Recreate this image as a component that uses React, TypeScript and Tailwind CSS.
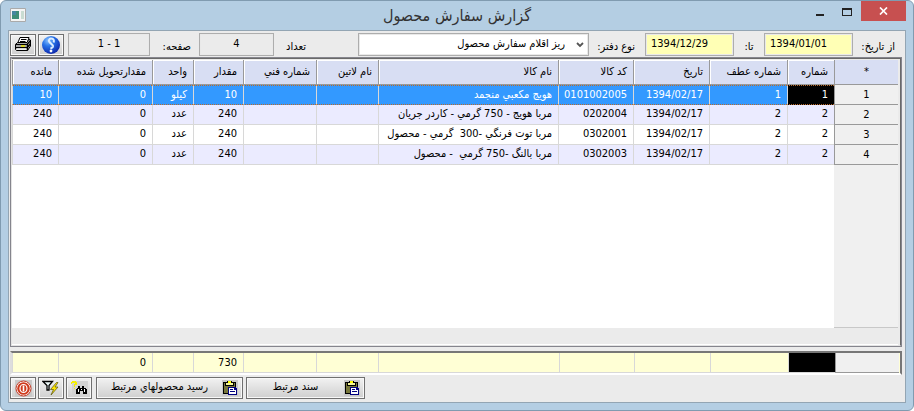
import type { ReactNode } from "react";

interface OrderRow {
  number: string;
  reference: string;
  date: string;
  code: string;
  name: string;
  quantity: string;
  unit: string;
  delivered: string;
  remaining: string;
}

const ROWS: OrderRow[] = [
  {
    number: "1",
    reference: "1",
    date: "1394/02/17",
    code: "0101002005",
    name: "هويج مکعبي منجمد",
    quantity: "10",
    unit: "کيلو",
    delivered: "0",
    remaining: "10",
  },
  {
    number: "2",
    reference: "2",
    date: "1394/02/17",
    code: "0202004",
    name: "مربا هويج - 750 گرمي - کاردر جريان",
    quantity: "240",
    unit: "عدد",
    delivered: "0",
    remaining: "240",
  },
  {
    number: "2",
    reference: "2",
    date: "1394/02/17",
    code: "0302001",
    name: "مربا توت فرنگي -300  گرمي - محصول",
    quantity: "240",
    unit: "عدد",
    delivered: "0",
    remaining: "240",
  },
  {
    number: "2",
    reference: "2",
    date: "1394/02/17",
    code: "0302003",
    name: "مربا بالنگ -750 گرمي  - محصول",
    quantity: "240",
    unit: "عدد",
    delivered: "0",
    remaining: "240",
  },
];

const COLUMNS: { key: keyof OrderRow | null; label: string; total?: string }[] = [
  { key: "number", label: "شماره" },
  { key: "reference", label: "شماره عطف" },
  { key: "date", label: "تاريخ" },
  { key: "code", label: "کد کالا" },
  { key: "name", label: "نام کالا" },
  { key: null, label: "نام لاتين" },
  { key: null, label: "شماره فني" },
  { key: "quantity", label: "مقدار", total: "730" },
  { key: "unit", label: "واحد" },
  { key: "delivered", label: "مقدارتحويل شده", total: "0" },
  { key: "remaining", label: "مانده" },
];

const FIELD =
  "h-[23px] border border-[#adadad] px-[5px] pb-0.5 text-[11px] leading-4 shadow-[inset_0_0_0_1px_#e9e9e9] outline-none";

function Columns() {
  return (
    <colgroup>
      <col className="w-16" />
      <col className="w-[47px]" />
      <col className="w-[78px]" />
      <col className="w-[76px]" />
      <col className="w-[75px]" />
      <col />
      <col className="w-[62px]" />
      <col className="w-[73px]" />
      <col className="w-[50px]" />
      <col className="w-[41px]" />
      <col className="w-[94px]" />
      <col className="w-[46px]" />
    </colgroup>
  );
}

function ToolButton({ label, children }: { label: string; children: ReactNode }) {
  return (
    <button
      type="button"
      aria-label={label}
      className="flex h-[22px] w-[26px] shrink-0 items-center justify-center border border-[#707070] bg-linear-to-b from-[#f2f2f2] to-[#cfcfcf] shadow-[inset_0_0_0_1px_#f8f8f8]"
    >
      {children}
    </button>
  );
}

function ActionButton({ className, children }: { className: string; children: ReactNode }) {
  return (
    <button
      type="button"
      className={`flex h-[22px] flex-row-reverse items-center border border-[#707070] bg-linear-to-b from-[#f2f2f2] to-[#cfcfcf] pr-1 shadow-[inset_0_0_0_1px_#f8f8f8] ${className}`}
    >
      <ClipboardIcon />
      <span className="flex-1 pb-0.5 text-center">{children}</span>
    </button>
  );
}

function ClipboardIcon() {
  return (
    <svg width="16" height="16" viewBox="0 0 16 16" shapeRendering="crispEdges" aria-hidden="true">
      <path d="M0 0h16v16H0z" fill="#c8c8c8" />
      <path d="M1 2h13v12H1z" fill="#000" />
      <path d="M2 3h11v10H2z" fill="#77773a" />
      <path d="M3 3h9v3H3z" fill="#000" />
      <path d="M4 3h7v2H4z" fill="#f5f59a" />
      <path d="M5 1h5v2H5z" fill="#000" />
      <path d="M6 1h3v2H6z" fill="#ffff00" />
      <path d="M6 7h7l2 2v6H6z" fill="#000080" />
      <path d="M7 8h5v2h2v4H7z" fill="#fff" />
      <path d="M8 9h3v1H8zM8 11h5v1H8z" fill="#000080" />
    </svg>
  );
}

function PrinterIcon() {
  return (
    <svg width="18" height="17" viewBox="0 0 18 17" aria-hidden="true">
      <path d="M6 1.5h9l-2 6H3.500z" fill="#fff" stroke="#000" />
      <path d="M7 3.500h5.500M6 5.500h5.500" stroke="#000" />
      <path d="M1.500 8.500l2-2h9.500l2-3.500 1.500 1v6l-3 4.500h-11l-1-1z" fill="#ddd" stroke="#000" />
      <path d="M1.500 8.500h11.500l3.500-4M1.500 11.500h12l3-4M13.500 8.500v6" fill="none" stroke="#000" strokeWidth="1.400" />
      <path d="M7 10h4" stroke="#e8e000" strokeWidth="1.500" />
      <path d="M3 13h9" stroke="#fff" />
    </svg>
  );
}

function HelpIcon() {
  return (
    <svg width="20" height="20" viewBox="0 0 20 20" aria-hidden="true">
      <defs>
        <radialGradient id="help" cx="0.35" cy="0.25" r="0.8">
          <stop offset="0" stopColor="#8bc4ff" />
          <stop offset="0.4" stopColor="#2873e8" />
          <stop offset="1" stopColor="#0a22a8" />
        </radialGradient>
      </defs>
      <circle cx="10" cy="10" r="9" fill="url(#help)" />
      <path
        d="M12.500 7.500C14.500 3.500 9 2.500 8 5c-1 3 4.500 4 4 6.500-.3 1.300-1.800 1.500-2.600 1.300"
        fill="none"
        stroke="#dcecff"
        strokeWidth="2"
      />
      <circle cx="10" cy="16" r="1.400" fill="#fff" />
    </svg>
  );
}

function PowerIcon() {
  return (
    <svg width="17" height="17" viewBox="0 0 17 17" aria-hidden="true">
      <path d="M0 0h17v17H0z" fill="#c9c9c9" />
      <circle cx="8.500" cy="8.500" r="7.500" fill="#fff" stroke="#c43a25" />
      <circle cx="8.500" cy="8.500" r="6.300" fill="#cf3a1c" />
      <ellipse cx="8.500" cy="8.500" rx="3.500" ry="4" fill="none" stroke="#fff" strokeWidth="1.200" />
      <path d="M8.500 5.500v6" stroke="#fff" strokeWidth="1.600" />
    </svg>
  );
}

function FilterIcon() {
  return (
    <svg width="18" height="16" viewBox="0 0 18 16" aria-hidden="true">
      <path d="M1 1.500h9.500L7 5.500V10H5V5.500z" fill="#eefafa" stroke="#000" strokeWidth="1.300" />
      <path d="M14.500 2.500L8.500 9.500h3L9 15l7-8h-3l3-4.500z" fill="#ffe600" stroke="#55500a" strokeWidth="0.700" />
    </svg>
  );
}

function FindIcon() {
  return (
    <svg width="18" height="16" viewBox="0 0 18 16" shapeRendering="crispEdges" aria-hidden="true">
      <path d="M2 1h16v15H2z" fill="#d3d3d3" />
      <path d="M1 2h1V1h4v1h1v3H5v2H4V4h1V3H2v1H1zM4 8h1v1H4z" fill="#f4f000" />
      <path d="M8 6h2v2h2V6h2v2h2v1h1v5h-4v-3h-3v3H6V9h1V8h1z" fill="#000" />
      <path d="M8 9h1v3H8zM14 9h1v3h-1zM11 9h1v1h-1z" fill="#fff" />
    </svg>
  );
}

function TitleBar() {
  return (
    <header dir="ltr" className="flex h-[29px] shrink-0 items-start justify-between">
      <div className="w-28 pt-[7px] pl-0.5">
        <svg width="16" height="14" viewBox="0 0 16 14" aria-hidden="true">
          <path d="M.500.500h15v13H.500z" fill="#f4f4f4" stroke="#aaa" />
          <path d="M2 3h7v8H2z" fill="#3e8d78" />
          <path d="M2 3h4v4H2z" fill="#4686a0" />
          <path d="M11 3h3v8h-3z" fill="#c9dcd2" />
        </svg>
      </div>
      <h1 dir="rtl" className="pt-[3px] text-[16px] leading-6 text-[#333]">
        گزارش سفارش محصول
      </h1>
      <div className="flex w-28 justify-end">
        <button type="button" aria-label="کوچک کردن" className="flex h-[23px] w-[27px] items-center justify-center">
          <svg width="10" height="10" viewBox="0 0 10 10" aria-hidden="true">
            <path d="M1 6h8v2H1z" fill="#222" />
          </svg>
        </button>
        <button type="button" aria-label="بزرگ کردن" className="flex h-[21px] w-[27px] items-center justify-center">
          <svg width="10" height="8" viewBox="0 0 10 8" shapeRendering="crispEdges" aria-hidden="true">
            <path d="M0 0h10v8H0zM1 2v5h8V2z" fill="#222" fillRule="evenodd" />
          </svg>
        </button>
        <button
          type="button"
          aria-label="بستن"
          className="flex h-[20px] w-[45px] items-center justify-center bg-[#c75050]"
        >
          <svg width="9" height="8" viewBox="0 0 9 8" aria-hidden="true">
            <path d="M1 .500l7 7M8 .500l-7 7" stroke="#fff" strokeWidth="1.700" />
          </svg>
        </button>
      </div>
    </header>
  );
}

function FilterBar() {
  return (
    <div className="flex items-center pt-0.5 pb-px">
      <label htmlFor="from" className="w-[49px] shrink-0 pt-1 pr-[7px] whitespace-nowrap">
        از تاريخ:
      </label>
      <input id="from" dir="ltr" defaultValue="1394/01/01" className={`${FIELD} w-[89px] bg-[#ffffb5]`} />
      <label htmlFor="to" className="w-[30px] shrink-0 pt-1 text-center">
        تا:
      </label>
      <input id="to" dir="ltr" defaultValue="1394/12/29" className={`${FIELD} w-[89px] bg-[#ffffb5]`} />
      <label htmlFor="book" className="w-14 shrink-0 pt-1 pr-2.5 whitespace-nowrap">
        نوع دفتر:
      </label>
      <div className="relative flex-1">
        <select id="book" className={`${FIELD} block w-full appearance-none bg-white pr-[23px]`}>
          <option>ريز اقلام سفارش محصول</option>
        </select>
        <svg
          className="pointer-events-none absolute top-2 right-1"
          width="10"
          height="8"
          viewBox="0 0 10 8"
          aria-hidden="true"
        >
          <path d="M2 2l3 3 3-3" fill="none" stroke="#555" strokeWidth="1.800" />
        </svg>
      </div>
      <label htmlFor="count" className="w-[84px] shrink-0 pt-1 pr-[52px]">
        تعداد
      </label>
      <input id="count" readOnly value="4" className={`${FIELD} w-[75px] bg-[#ebebeb] text-center`} />
      <label htmlFor="page" className="w-[49px] shrink-0 pt-1 pr-2">
        صفحه:
      </label>
      <input id="page" dir="ltr" readOnly value="1 - 1" className={`${FIELD} w-[82px] bg-[#ebebeb] text-center`} />
      <div className="mr-1 flex gap-0.5">
        <ToolButton label="راهنما">
          <HelpIcon />
        </ToolButton>
        <ToolButton label="چاپ">
          <PrinterIcon />
        </ToolButton>
      </div>
    </div>
  );
}

function OrdersGrid() {
  return (
    <div className="flex flex-1 flex-col border border-[#85858d] bg-[#ebebeb]">
      <div className="flex flex-1 flex-col border border-[#e3e3e3] border-t-[#696969] border-r-[#696969] pt-px pr-[2px]">
        <table className="w-full table-fixed border-separate border-spacing-0">
          <Columns />
          <thead>
            <tr className="h-[25px] bg-[#d8def3]">
              <th className="border-b border-l border-[#999] text-center font-normal">*</th>
              {COLUMNS.map((column) => (
                <th
                  key={column.label}
                  className="border-b border-l border-[#999] px-1.5 py-0 text-right font-normal whitespace-nowrap shadow-[inset_1px_1px_0_#fff]"
                >
                  {column.label}
                </th>
              ))}
            </tr>
          </thead>
          <tbody>
            {ROWS.map((row, i) => (
              <tr
                key={row.code}
                className={`h-5 ${i === 0 ? "bg-[#3399ff] text-white" : i % 2 ? "bg-[#ebebff]" : "bg-white"}`}
              >
                <th className="border-b border-l border-[#999] bg-[#f0f0f0] p-0 text-center font-normal text-black">
                  {i + 1}
                </th>
                {COLUMNS.map((column, j) => (
                  <td
                    key={column.label}
                    className={`border-l border-l-[#d8d8d8] px-1.5 pt-0 text-right leading-4 whitespace-pre ${
                      i === 0
                        ? "border-y border-y-[#b86a2c] pb-px [border-style:dotted_solid]"
                        : "border-b border-b-[#d8d8d8] pb-0.5"
                    } ${i === 0 && j === 0 ? "bg-black" : ""}`}
                  >
                    {column.key && row[column.key]}
                  </td>
                ))}
              </tr>
            ))}
          </tbody>
        </table>
        <div className="flex flex-1 bg-white">
          <div className="w-16 border-b border-[#c8c8c8] bg-[#f0f0f0]" />
        </div>
        <div className="h-[17px] border-b border-white" />
      </div>
    </div>
  );
}

function TotalsBar() {
  return (
    <div className="mt-1 border-2 border-t-[#777] border-r-[#777] border-b-white border-l-[#ddd] bg-[#ffffd5] pr-px">
      <table className="w-full table-fixed border-separate border-spacing-0">
        <Columns />
        <tbody>
          <tr className="h-5">
            <th className="border-b border-l border-[#999] bg-[#f0f0f0] p-0" />
            {COLUMNS.map((column, j) => (
              <td
                key={column.label}
                className={`border-b border-l border-[#d8d8d8] px-1.5 py-0 text-right leading-4 ${j === 0 ? "bg-black" : ""}`}
              >
                {column.total}
              </td>
            ))}
          </tr>
        </tbody>
      </table>
    </div>
  );
}

export default function App() {
  return (
    <div
      dir="rtl"
      className="flex min-h-screen flex-col rounded-md border border-[#809bb0] bg-[#b4cee3] px-[7px] pb-[7px] font-['DejaVu_Sans_Condensed','DejaVu_Sans',sans-serif] text-[11px] leading-4 text-black"
    >
      <TitleBar />
      <main className="flex flex-1 flex-col border border-[#93a5b3] bg-[#ebebeb] pr-[3px] pl-px">
        <FilterBar />
        <OrdersGrid />
        <TotalsBar />
        <footer dir="ltr" className="flex items-center gap-0.5 pt-0.5 pb-[3px]">
          <ToolButton label="خروج">
            <PowerIcon />
          </ToolButton>
          <ToolButton label="فيلتر">
            <FilterIcon />
          </ToolButton>
          <ToolButton label="جستجو">
            <FindIcon />
          </ToolButton>
          <div className="ml-0.5 flex gap-[3px]">
            <ActionButton className="w-[147px]">رسيد محصولهاي مرتبط</ActionButton>
            <ActionButton className="w-[119px]">سند مرتبط</ActionButton>
          </div>
        </footer>
      </main>
    </div>
  );
}
